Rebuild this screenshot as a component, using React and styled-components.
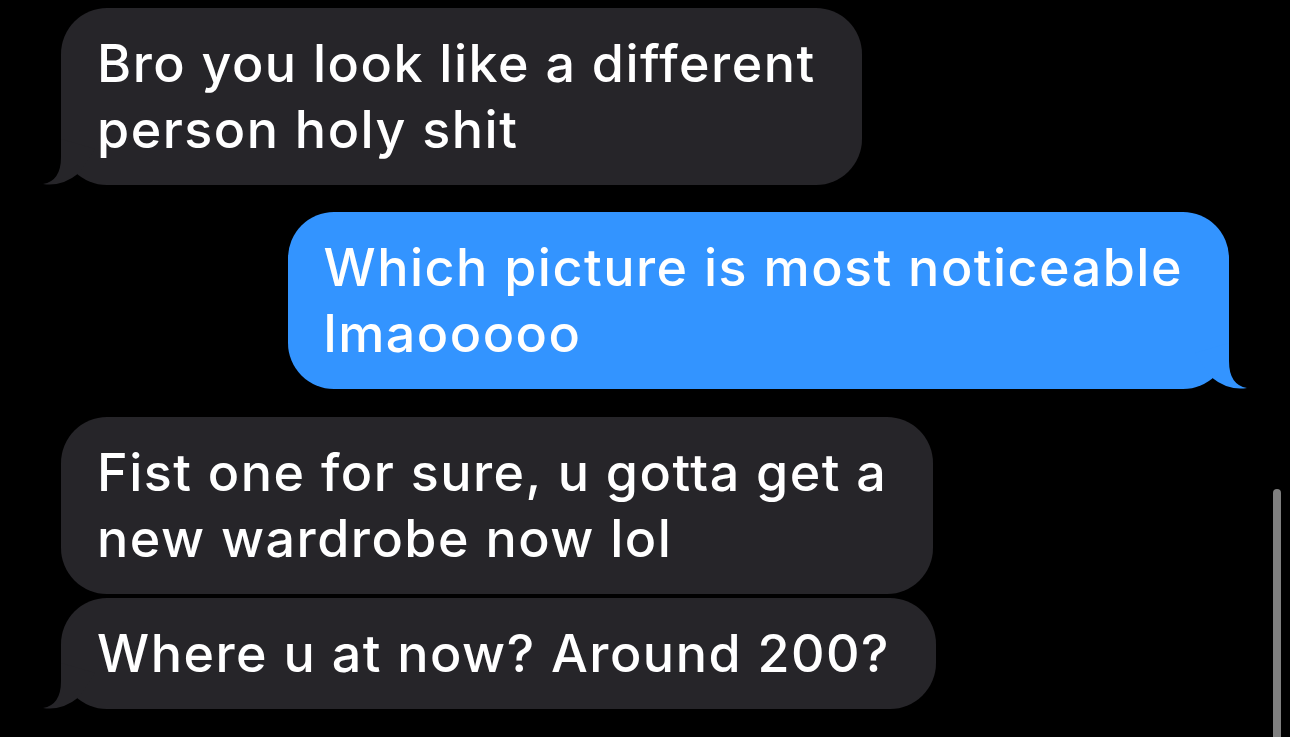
import React from 'react';
import styled, { createGlobalStyle } from 'styled-components';

const GlobalStyle = createGlobalStyle`
  html, body {
    margin: 0;
    padding: 0;
    background: #000;
  }
  body {
    font-family: 'Inter', 'Noto Sans', 'Liberation Sans', sans-serif;
    -webkit-font-smoothing: antialiased;
  }
`;

const Screen = styled.div`
  position: relative;
  width: 1290px;
  height: 737px;
  overflow: hidden;
  background: #000;
  display: flex;
  flex-direction: column;
  padding-top: 8px;
  box-sizing: border-box;
`;

const Bubble = styled.div`
  position: relative;
  align-self: ${p => (p.$sent ? 'flex-end' : 'flex-start')};
  margin: ${p => p.$gap || 0}px ${p => (p.$sent ? '61px' : '0')} 0 ${p => (p.$sent ? '0' : '61px')};
  padding: 23px 46px 22px 36px;
  border-radius: 46px;
  background: ${p => (p.$sent ? '#3394ff' : '#262529')};
  color: #fff;
  font-size: 52px;
  font-weight: 500;
  line-height: 66px;
  letter-spacing: 1.5px;
  white-space: nowrap;
`;

const Tail = styled.svg`
  position: absolute;
  bottom: 0;
  width: 60px;
  height: 50px;
  ${p => (p.$sent ? 'right: -20px; transform: scaleX(-1);' : 'left: -20px;')}
`;

const BubbleTail = ({ sent }) => (
  <Tail $sent={sent} viewBox="0 0 60 50">
    <path
      d="M20 4 L20 22 Q20 46 2 49 Q21 52 38 38 L54 14 Z"
      fill={sent ? '#3394ff' : '#262529'}
    />
  </Tail>
);

const ScrollThumb = styled.div`
  position: absolute;
  right: 9px;
  top: 489px;
  width: 8px;
  height: 260px;
  border-radius: 4px;
  background: #7f7f7f;
`;

const Message = ({ sent, tail, gap, children }) => (
  <Bubble $sent={sent} $gap={gap}>
    {tail && <BubbleTail sent={sent} />}
    {children}
  </Bubble>
);

export default function App() {
  return (
    <>
      <GlobalStyle />
      <Screen>
        <Message tail>
          Bro you look like a different
          <br />
          person holy shit
        </Message>
        <Message sent tail gap={27}>
          Which picture is most noticeable
          <br />
          lmaooooo
        </Message>
        <Message gap={28}>
          Fist one for sure, u gotta get a
          <br />
          new wardrobe now lol
        </Message>
        <Message tail gap={4}>
          Where u at now? Around 200?
        </Message>
        <ScrollThumb />
      </Screen>
    </>
  );
}
